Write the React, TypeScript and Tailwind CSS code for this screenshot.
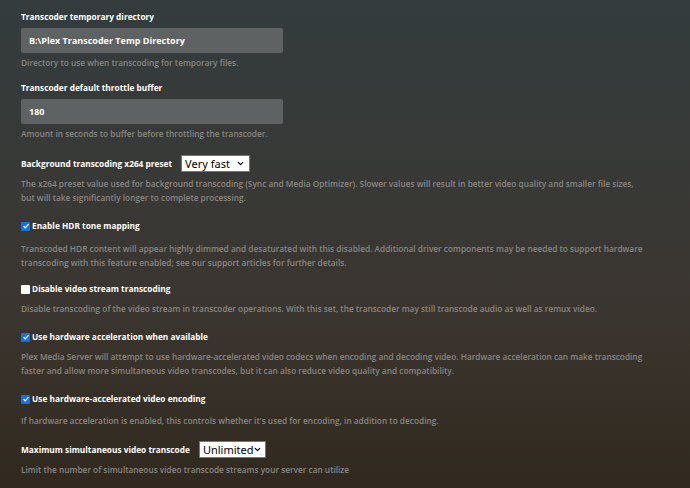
import { ChevronDown } from "lucide-react";

const font = { fontFamily: '"Open Sans", "Noto Sans", sans-serif' };

function Label({ children }: { children: React.ReactNode }) {
  return <div className="whitespace-nowrap text-[8.3px] font-bold leading-[12px] text-white">{children}</div>;
}

function Help({ children }: { children: React.ReactNode }) {
  return <p className="text-[8.3px] font-semibold leading-[14px] text-[#888682]">{children}</p>;
}

function TextField({ value }: { value: string }) {
  return (
    <div className="mt-[5px] flex h-[25px] w-[262px] items-center rounded-[2px] bg-[#5f6262] px-2 text-[9px] font-bold text-white">
      {value}
    </div>
  );
}

function Select({ value, width }: { value: string; width: string }) {
  return (
    <div
      className={`flex h-[17px] shrink-0 items-center whitespace-nowrap border border-[#767676] bg-white pl-[3px] pr-[4px] text-[11px] leading-none text-black ${width}`}
      style={{ fontFamily: '"Noto Sans", "Open Sans", sans-serif' }}
    >
      <span>{value}</span>
      <ChevronDown size={9} strokeWidth={3.5} className="ml-auto shrink-0" />
    </div>
  );
}

function Check({ checked, label }: { checked: boolean; label: string }) {
  return (
    <div className="flex items-center gap-[2px]">
      {checked ? (
        <span className="flex h-[9px] w-[9px] items-center justify-center rounded-[1px] bg-[#1471e8]">
          <svg viewBox="0 0 10 10" className="h-[8px] w-[8px]">
            <path d="M2 5.2 L4.1 7.3 L8.2 2.6" fill="none" stroke="white" strokeWidth="1.6" />
          </svg>
        </span>
      ) : (
        <span className="h-[9px] w-[9px] rounded-[1px] bg-white" />
      )}
      <Label>{label}</Label>
    </div>
  );
}

export default function App() {
  return (
    <div
      className="h-[488px] w-[690px] overflow-hidden bg-[linear-gradient(to_bottom,#343c3d_0%,#383937_35%,#3b352f_65%,#31291f_100%)] px-[21px] pt-[11px]"
      style={font}
    >
      <Label>Transcoder temporary directory</Label>
      <TextField value="B:\Plex Transcoder Temp Directory" />
      <div className="mt-[3px]">
        <Help>Directory to use when transcoding for temporary files.</Help>
      </div>

      <div className="mt-[12px]">
        <Label>Transcoder default throttle buffer</Label>
      </div>
      <TextField value="180" />
      <div className="mt-[3px]">
        <Help>Amount in seconds to buffer before throttling the transcoder.</Help>
      </div>

      <div className="mt-[14px] flex items-center gap-[9px]">
        <Label>Background transcoding x264 preset</Label>
        <Select value="Very fast" width="w-[69px]" />
      </div>
      <div className="mt-[5px]">
        <Help>
          The x264 preset value used for background transcoding (Sync and Media Optimizer). Slower values will result in better video quality and smaller file sizes,
          <br />
          but will take significantly longer to complete processing.
        </Help>
      </div>

      <div className="mt-[15px]">
        <Check checked label="Enable HDR tone mapping" />
      </div>
      <div className="mt-[10px]">
        <Help>
          Transcoded HDR content will appear highly dimmed and desaturated with this disabled. Additional driver components may be needed to support hardware
          <br />
          transcoding with this feature enabled; see our support articles for further details.
        </Help>
      </div>

      <div className="mt-[13px]">
        <Check checked={false} label="Disable video stream transcoding" />
      </div>
      <div className="mt-[7px]">
        <Help>
          Disable transcoding of the video stream in transcoder operations. With this set, the transcoder may still transcode audio as well as remux video.
        </Help>
      </div>

      <div className="mt-[15px]">
        <Check checked label="Use hardware acceleration when available" />
      </div>
      <div className="mt-[7px]">
        <Help>
          Plex Media Server will attempt to use hardware-accelerated video codecs when encoding and decoding video. Hardware acceleration can make transcoding
          <br />
          faster and allow more simultaneous video transcodes, but it can also reduce video quality and compatibility.
        </Help>
      </div>

      <div className="mt-[15px]">
        <Check checked label="Use hardware-accelerated video encoding" />
      </div>
      <div className="mt-[9px]">
        <Help>If hardware acceleration is enabled, this controls whether it's used for encoding, in addition to decoding.</Help>
      </div>

      <div className="mt-[13px] flex items-center gap-[9px]">
        <Label>Maximum simultaneous video transcode</Label>
        <Select value="Unlimited" width="w-[67px]" />
      </div>
      <div className="mt-[5px]">
        <Help>Limit the number of simultaneous video transcode streams your server can utilize</Help>
      </div>
    </div>
  );
}
